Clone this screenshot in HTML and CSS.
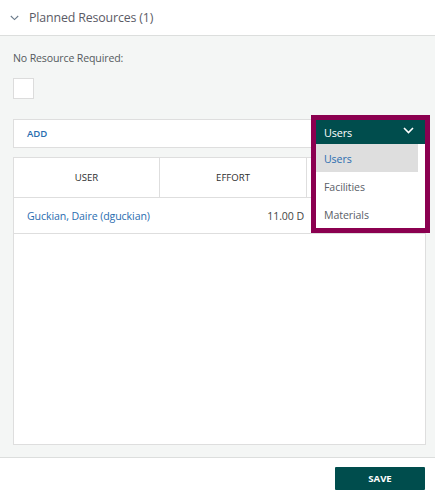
FILE: index.html
```html
<!DOCTYPE html>
<html>
<head>
<meta charset="utf-8">
<link rel="stylesheet" href="styles.css">
</head>
<body>
<div class="page">
  <div class="panel-head">
    <svg class="caret" width="9" height="6" viewBox="0 0 9 6"><path d="M0.8 1 L4.5 4.6 L8.2 1" fill="none" stroke="#6a7a8a" stroke-width="1.1"/></svg>
    <span class="panel-title">Planned Resources (1)</span>
  </div>
  <div class="panel-body">
    <div class="label">No Resource Required:</div>
    <div class="checkbox"></div>
    <div class="add-bar"><span class="add">ADD</span></div>
    <div class="table">
      <div class="thead">
        <div class="th">USER</div>
        <div class="th">EFFORT</div>
        <div class="th th-last"></div>
      </div>
      <div class="row">
        <div class="td user">Guckian, Daire (dguckian)</div>
        <div class="td effort">11.00 D</div>
        <div class="td"></div>
      </div>
    </div>
    <div class="dropdown">
      <div class="dd-head">
        <span>Users</span>
        <svg width="11" height="7" viewBox="0 0 11 7"><path d="M1 1 L5.5 5.5 L10 1" fill="none" stroke="#ffffff" stroke-width="1.6"/></svg>
      </div>
      <div class="dd-list">
        <div class="dd-opt active">Users</div>
        <div class="dd-opt">Facilities</div>
        <div class="dd-opt">Materials</div>
      </div>
    </div>
  </div>
  <div class="footer">
    <button class="save">SAVE</button>
  </div>
</div>
</body>
</html>
```

FILE: styles.css
```css
* { box-sizing: border-box; }
html, body { margin: 0; padding: 0; }
body {
  font-family: "Open Sans", "Noto Sans", sans-serif;
  background: #ffffff;
  width: 435px;
  height: 492px;
  overflow: hidden;
}
.page { width: 435px; }
.panel-head {
  height: 36px;
  background: #ffffff;
  border-bottom: 1px solid #dcdedd;
  display: flex;
  align-items: center;
  padding-left: 10px;
}
.caret { margin-right: 10px; margin-top: 1px; }
.panel-title {
  font-size: 12.4px;
  color: #5b5b66;
  letter-spacing: -0.15px;
}
.panel-body {
  position: relative;
  background: #f4f6f5;
  padding: 15px 9px 13px 13px;
  height: 422px;
  border-bottom: 1px solid #dcdedd;
}
.label {
  font-size: 10.6px;
  color: #555a60;
  letter-spacing: -0.15px;
  line-height: 14px;
}
.checkbox {
  margin-top: 13px;
  width: 21px;
  height: 21px;
  background: #fff;
  border: 1px solid #dcdcdc;
}
.add-bar {
  margin-top: 20px;
  height: 29px;
  background: #fff;
  border: 1px solid #dedede;
  display: flex;
  align-items: center;
  padding-left: 13px;
}
.add {
  font-size: 9.6px;
  color: #2a6db0;
  font-weight: 600;
}
.table {
  margin-top: 9px;
  background: #fff;
  border: 1px solid #dedede;
  height: 288px;
}
.thead {
  display: grid;
  grid-template-columns: 146px 147px 1fr;
  height: 40px;
  border-bottom: 1px solid #dedede;
}
.th {
  display: flex;
  align-items: center;
  justify-content: center;
  font-size: 9.6px;
  color: #2e2e2e;
  font-weight: 500;
  border-right: 1px solid #dedede;
}
.th-last { border-right: none; }
.row {
  display: grid;
  grid-template-columns: 146px 147px 1fr;
  height: 36px;
  border-bottom: 1px solid #dedede;
  align-items: center;
}
.td { font-size: 10.6px; letter-spacing: -0.1px; }
.user { color: #2a6db0; padding-left: 13px; white-space: nowrap; }
.effort { color: #444; text-align: right; padding-right: 3px; }
.dropdown {
  position: absolute;
  left: 311px;
  top: 79px;
  width: 119px;
  border: 5px solid #8b0050;
  background: #fff;
}
.dd-head {
  height: 24px;
  background: #004d4d;
  color: #fff;
  display: flex;
  align-items: center;
  justify-content: space-between;
  padding: 0 11px 0 8px;
  font-size: 10.8px;
  letter-spacing: -0.1px;
}
.dd-head svg { margin-top: -3px; }
.dd-list { padding-right: 7px; }
.dd-opt {
  height: 28px;
  display: flex;
  align-items: center;
  padding-left: 8px;
  padding-top: 2px;
  font-size: 10.6px;
  color: #5a6068;
  letter-spacing: -0.1px;
}
.dd-opt.active { background: #dedede; color: #2a6db0; }
.footer {
  height: 34px;
  display: flex;
  justify-content: flex-end;
  align-items: flex-start;
  padding: 9px 10px 0 0;
}
.save {
  width: 90px;
  height: 23px;
  border: none;
  background: #004d4d;
  color: #fff;
  font-family: "Open Sans", sans-serif;
  font-weight: 700;
  font-size: 9.6px;
  border-radius: 1px;
  padding: 0;
}
```
